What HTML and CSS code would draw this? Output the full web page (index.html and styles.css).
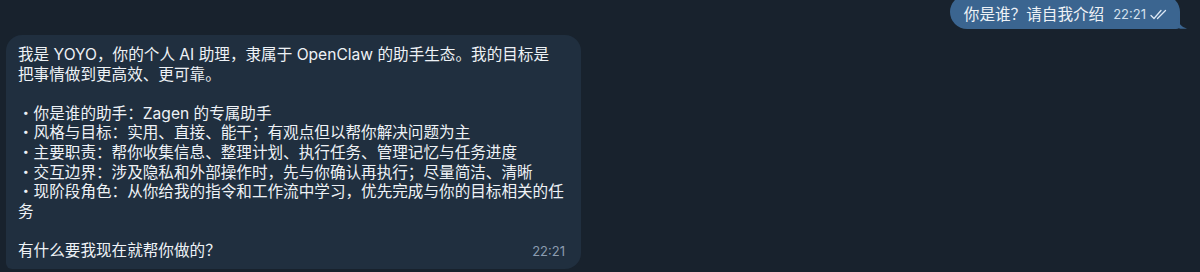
FILE: index.html
```html
<!DOCTYPE html>
<html lang="zh-CN">
<head>
  <meta charset="UTF-8" />
  <meta name="viewport" content="width=device-width, initial-scale=1.0" />
  <title>Chat</title>
  <link rel="stylesheet" href="styles.css">
</head>
<body>
  <div class="chat">
    <div class="row row-out">
      <div class="bubble bubble-out">
        <span class="text">你是谁？请自我介绍</span>
        <span class="meta">22:21
          <svg class="checks" width="18" height="11" viewBox="0 0 18 11">
            <path d="M1 6.5 L4 9.5 L11 1.5" fill="none" stroke="currentColor" stroke-width="1.3" stroke-linecap="round" stroke-linejoin="round"/>
            <path d="M7.5 9.5 L15.5 1.5" fill="none" stroke="currentColor" stroke-width="1.3" stroke-linecap="round"/>
          </svg>
        </span>
        <svg class="tail" width="10" height="12" viewBox="0 0 10 12">
          <path d="M0 0 C0 6 3 10 9 11.5 C6 12 2 12 0 11 Z" fill="#3b6590"/>
        </svg>
      </div>
    </div>

    <div class="row row-in">
      <div class="bubble bubble-in">
        <p>我是 YOYO，你的个人 AI 助理，隶属于 OpenClaw 的助手生态。我的目标是<br>把事情做到更高效、更可靠。</p>
        <p class="gap">&nbsp;</p>
        <p>・你是谁的助手：Zagen 的专属助手</p>
        <p>・风格与目标：实用、直接、能干；有观点但以帮你解决问题为主</p>
        <p>・主要职责：帮你收集信息、整理计划、执行任务、管理记忆与任务进度</p>
        <p>・交互边界：涉及隐私和外部操作时，先与你确认再执行；尽量简洁、清晰</p>
        <p>・现阶段角色：从你给我的指令和工作流中学习，优先完成与你的目标相关的任<br>务</p>
        <p class="gap">&nbsp;</p>
        <div class="last">
          <p>有什么要我现在就帮你做的？</p>
          <span class="time">22:21</span>
        </div>
      </div>
    </div>
  </div>
</body>
</html>
```

FILE: styles.css
```css
html, body {
  margin: 0;
  height: 100%;
  background: #18222d;
  overflow: hidden;
}
body {
  font-family: Inter, "Noto Sans CJK SC", sans-serif;
  color: #eef2f6;
}
.chat {
  display: flex;
  flex-direction: column;
  gap: 6px;
  padding: 0 20px 0 6px;
  margin-top: -5px;
}
.row {
  display: flex;
}
.row-out { justify-content: flex-end; }
.row-in { justify-content: flex-start; }

.bubble {
  position: relative;
  box-sizing: border-box;
}
.bubble-out {
  background: #3b6590;
  border-radius: 17px 17px 4px 17px;
  height: 34px;
  padding: 0 12px 0 14px;
  display: flex;
  align-items: center;
  gap: 9px;
  font-size: 15.6px;
}
.bubble-out .text {
  position: relative;
  top: 1px;
}
.bubble-out .meta {
  display: flex;
  align-items: center;
  gap: 4px;
  font-size: 13px;
  color: #d3e0ee;
  position: relative;
  top: 2px;
}
.checks { color: #dde8f4; }
.tail {
  position: absolute;
  right: -8px;
  bottom: 0;
}

.bubble-in {
  width: 575px;
  background: #202f3f;
  border-radius: 16px 16px 16px 6px;
  padding: 10px 14px 7px 12px;
  font-size: 15.6px;
  line-height: 19.6px;
}
.bubble-in p {
  margin: 0;
  white-space: nowrap;
}
.last {
  display: flex;
  justify-content: space-between;
  align-items: baseline;
}
.time {
  font-size: 13px;
  color: #8b9cb0;
  margin-right: 2px;
}
```
